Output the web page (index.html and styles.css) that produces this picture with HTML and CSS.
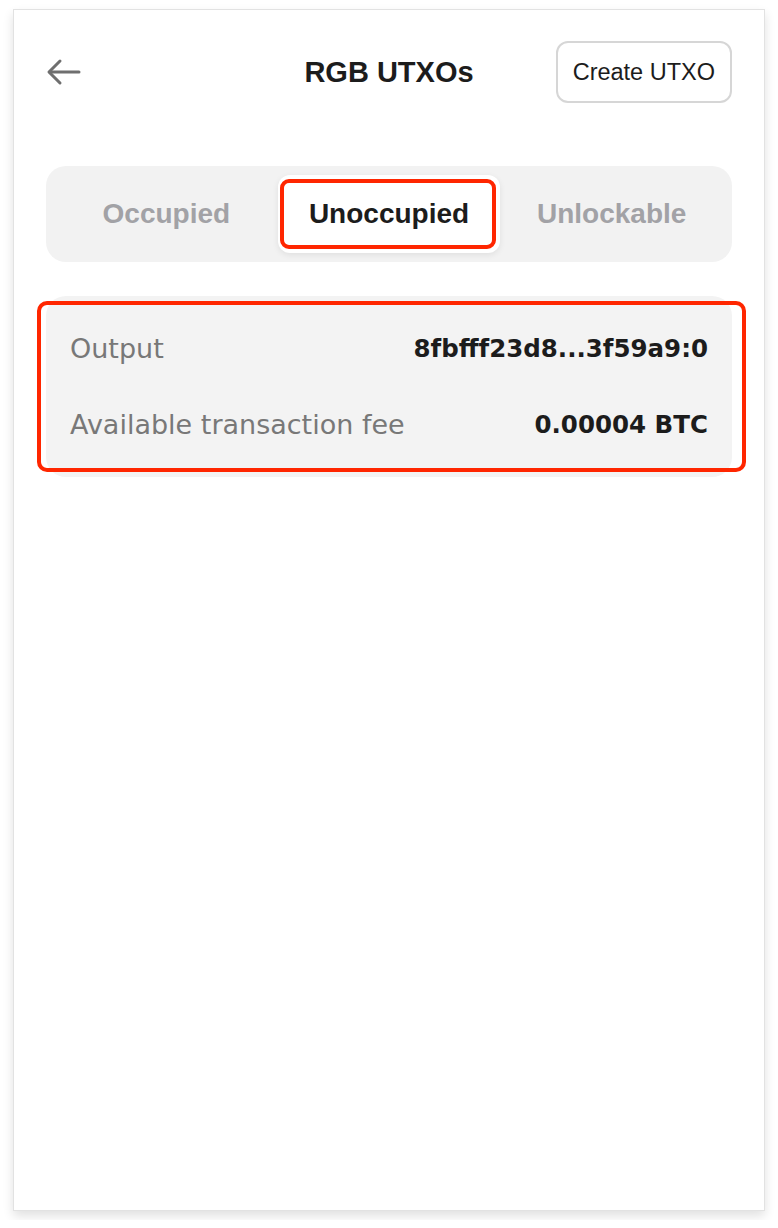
FILE: index.html
```html
<!DOCTYPE html>
<html lang="en">
<head>
  <meta charset="UTF-8" />
  <meta name="viewport" content="width=device-width, initial-scale=1" />
  <title>RGB UTXOs</title>
  <link rel="stylesheet" href="styles.css">
</head>
<body>
  <div class="screen">
    <header class="topBar">
      <button class="backBtn" aria-label="Back">
        <svg width="36" height="28" viewBox="0 0 36 28" fill="none" stroke="#6f6f6f" stroke-width="3" stroke-linecap="round" stroke-linejoin="round">
          <path d="M33 14H4" />
          <path d="M14 3L3 14l11 11" />
        </svg>
      </button>
      <h1 class="pageTitle">RGB UTXOs</h1>
      <button class="createBtn">Create UTXO</button>
    </header>

    <nav class="tabs">
      <div class="tab">Occupied</div>
      <div class="tab active">Unoccupied<span class="mark"></span></div>
      <div class="tab">Unlockable</div>
    </nav>

    <section class="utxoCard">
      <div class="row">
        <span class="label">Output</span>
        <span class="value">8fbfff23d8...3f59a9:0</span>
      </div>
      <div class="row">
        <span class="label">Available transaction fee</span>
        <span class="value">0.00004 BTC</span>
      </div>
      <span class="mark cardMark"></span>
    </section>
  </div>
</body>
</html>
```

FILE: styles.css
```css
/* page frame */
body {
  margin: 0;
  padding: 9px 13px;
  background: #fff;
  font-family: "Liberation Sans", Arial, sans-serif;
  color: #1c1c1c;
}
.screen {
  box-sizing: border-box;
  height: 1202px;
  background: #fff;
  border: 1px solid #e2e2e2;
  box-shadow: 0 5px 10px rgba(0, 0, 0, 0.12);
  padding: 31px 32px 0;
}

/* header */
.topBar {
  display: grid;
  grid-template-columns: 1fr auto 1fr;
  align-items: center;
  height: 62px;
}
.backBtn {
  justify-self: start;
  background: none;
  border: none;
  padding: 0;
  display: flex;
  cursor: pointer;
}
.pageTitle {
  margin: 0;
  font-size: 29px;
  font-weight: bold;
  color: #1c1c1c;
}
.createBtn {
  justify-self: end;
  height: 62px;
  padding: 0 15px;
  background: #fff;
  border: 2px solid #d6d6d6;
  border-radius: 12px;
  font-family: "Liberation Sans", Arial, sans-serif;
  font-size: 23.5px;
  color: #1c1c1c;
  cursor: pointer;
}

/* tabs */
.tabs {
  margin-top: 63px;
  display: grid;
  grid-template-columns: 1fr 1fr 1fr;
  padding: 9px;
  background: #f2f2f2;
  border-radius: 20px;
}
.tab {
  position: relative;
  height: 78px;
  display: flex;
  align-items: center;
  justify-content: center;
  font-size: 28px;
  font-weight: bold;
  color: #a2a2a6;
  border-radius: 12px;
}
.tab.active {
  background: #fff;
  color: #1c1c1c;
  box-shadow: 0 2px 6px rgba(0, 0, 0, 0.08);
}

/* red highlight boxes */
.mark {
  position: absolute;
  top: 4px;
  bottom: 4px;
  left: 2px;
  right: 4px;
  border: 4px solid #ff2600;
  border-radius: 9px;
  pointer-events: none;
}

/* utxo card */
.utxoCard {
  position: relative;
  margin-top: 34px;
  padding: 14px 24px 15px;
  background: #f3f3f3;
  border-radius: 20px;
}
.row {
  height: 76px;
  display: flex;
  align-items: center;
  justify-content: space-between;
}
.label {
  font-family: "DejaVu Sans", sans-serif;
  font-size: 27px;
  color: #787878;
}
.value {
  font-family: "DejaVu Sans", sans-serif;
  font-size: 24.5px;
  font-weight: bold;
  color: #1c1c1c;
}
.cardMark {
  top: 5px;
  bottom: 5px;
  left: -9px;
  right: -14px;
  border-radius: 10px;
}
```
